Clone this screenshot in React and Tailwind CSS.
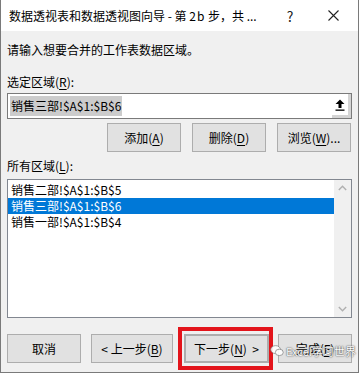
import React from 'react';

const font = { fontFamily: '"Noto Sans CJK SC", "Noto Sans", sans-serif' };

const Btn = ({ children, className = '' }) => (
  <div className={`flex items-center justify-center h-[29px] bg-[#e1e1e1] border border-[#adadad] text-[12px] text-[#000] whitespace-nowrap ${className}`}>
    {children}
  </div>
);

const U = ({ children }) => <span className="underline underline-offset-2">{children}</span>;

const App = () => {
  const items = [
    { text: '销售二部!$A$1:$B$5', selected: false },
    { text: '销售三部!$A$1:$B$6', selected: true },
    { text: '销售一部!$A$1:$B$4', selected: false },
  ];

  return (
    <div style={font} className="w-[359px] h-[373px] flex flex-col bg-[#f0f0f0] border-x border-b border-[#7a7a7a] text-[12px] text-black leading-[16px] overflow-hidden">
      {/* Title bar */}
      <div className="h-[31px] shrink-0 bg-white flex items-center pl-[8px]">
        <span className="w-[262px] whitespace-nowrap overflow-hidden text-[12px]">数据透视表和数据透视图向导 - 第 <span className="tracking-[1px]">2b</span> 步，共 ...</span>
        <span className="w-[38px] text-center text-[14px] text-[#222]">?</span>
        <div className="flex-1 flex justify-center">
          <svg width="11" height="11" viewBox="0 0 11 11">
            <path d="M0.5 0.5 L10.5 10.5 M10.5 0.5 L0.5 10.5" stroke="#222" strokeWidth="1.1" />
          </svg>
        </div>
      </div>

      <div className="flex-1 flex flex-col px-[6px]">
        <div className="mt-[11px]">请输入想要合并的工作表数据区域。</div>

        <div className="mt-[16px]">选定区域(<U>R</U>):</div>
        <div className="mt-[3px] h-[26px] flex bg-white border border-[#7a7a7a]">
          <div className="flex-1 flex items-center pl-[2px]">
            <span className="bg-[#cccccc] px-[1px] leading-[20px]">销售三部!$A$1:$B$6</span>
          </div>
          <div className="w-[19px] h-full bg-white border-r-[3px] border-b-[3px] border-[#d4d4d4] flex items-center justify-center">
            <svg width="10" height="12" viewBox="0 0 10 12">
              <path d="M5 0.5 L9.5 5 L6.5 5 L6.5 9 L3.5 9 L3.5 5 L0.5 5 Z" fill="#000" />
              <rect x="0.5" y="10.5" width="9" height="1.3" fill="#000" />
            </svg>
          </div>
        </div>

        <div className="mt-[4px] flex justify-end gap-[11px] pr-[1px]">
          <Btn className="w-[74px]">添加(<U>A</U>)</Btn>
          <Btn className="w-[74px]">删除(<U>D</U>)</Btn>
          <Btn className="w-[74px]">浏览(<U>W</U>)...</Btn>
        </div>

        <div className="mt-[6px]">所有区域(<U>L</U>):</div>
        <div className="mt-[5px] h-[139px] flex bg-white border border-[#828790]">
          <div className="flex-1 flex flex-col pt-[2px]">
            {items.map((it, i) => (
              <div key={i} className={`h-[16px] pl-[3px] leading-[16px] ${it.selected ? 'bg-[#0078d7] text-white' : ''}`}>
                {it.text}
              </div>
            ))}
          </div>
          <div className="w-[17px] bg-[#f0f0f0] flex flex-col items-center justify-between py-[5px]">
            <svg width="9" height="6" viewBox="0 0 9 6">
              <path d="M0.8 5 L4.5 1.2 L8.2 5" stroke="#b0b0b0" strokeWidth="1.4" fill="none" />
            </svg>
            <svg width="9" height="6" viewBox="0 0 9 6">
              <path d="M0.8 1 L4.5 4.8 L8.2 1" stroke="#b0b0b0" strokeWidth="1.4" fill="none" />
            </svg>
          </div>
        </div>

        <div className="mt-[16px] flex items-center relative">
          <Btn className="w-[74px]">取消</Btn>
          <Btn className="w-[82px] ml-[10px]">&lt; 上一步(<U>B</U>)</Btn>
          <div className="relative ml-[11px]">
            <Btn className="w-[85px] border-2 border-[#0078d7]">下一步(<U>N</U>) &nbsp;&gt;</Btn>
            <div className="absolute -left-[6px] -right-[4px] -top-[7px] -bottom-[7px] border-[4px] border-[#e3141b]" />
          </div>
          <Btn className="w-[74px] ml-[9px]">完成(<U>F</U>)</Btn>
          {/* watermark */}
          <div className="absolute left-[263px] top-[10px] flex items-center gap-[2px] whitespace-nowrap text-white text-[11px] leading-[14px] [text-shadow:0_0_2px_#444,0_0_1px_#444] opacity-90">
            <svg width="14" height="12" viewBox="0 0 15 13">
              <ellipse cx="6" cy="5" rx="5.3" ry="4.3" fill="#fff" stroke="#777" strokeWidth="0.8" />
              <ellipse cx="10" cy="8" rx="4.3" ry="3.5" fill="#fff" stroke="#777" strokeWidth="0.8" />
            </svg>
            <span>Excel学习世界</span>
          </div>
        </div>
      </div>
    </div>
  );
};

export default App;
